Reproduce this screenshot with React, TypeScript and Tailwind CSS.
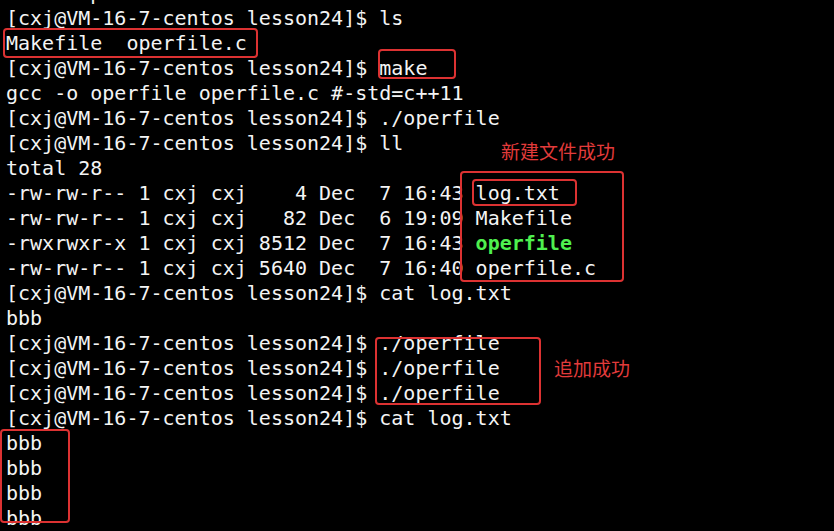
const prompt = "[cxj@VM-16-7-centos lesson24]$ ";

type Line = { text: string; exec?: string };

const lines: Line[] = [
  { text: "       p" },
  { text: prompt + "ls" },
  { text: "Makefile  operfile.c" },
  { text: prompt + "make" },
  { text: "gcc -o operfile operfile.c #-std=c++11" },
  { text: prompt + "./operfile" },
  { text: prompt + "ll" },
  { text: "total 28" },
  { text: "-rw-rw-r-- 1 cxj cxj    4 Dec  7 16:43 log.txt" },
  { text: "-rw-rw-r-- 1 cxj cxj   82 Dec  6 19:09 Makefile" },
  { text: "-rwxrwxr-x 1 cxj cxj 8512 Dec  7 16:43 ", exec: "operfile" },
  { text: "-rw-rw-r-- 1 cxj cxj 5640 Dec  7 16:40 operfile.c" },
  { text: prompt + "cat log.txt" },
  { text: "bbb" },
  { text: prompt + "./operfile" },
  { text: prompt + "./operfile" },
  { text: prompt + "./operfile" },
  { text: prompt + "cat log.txt" },
  { text: "bbb" },
  { text: "bbb" },
  { text: "bbb" },
  { text: "bbb" },
];

const boxes = [
  "left-[3px] top-[28px] w-[255px] h-[30px]",
  "left-[378px] top-[49px] w-[78px] h-[30px]",
  "left-[460px] top-[171px] w-[164px] h-[111px]",
  "left-[472px] top-[179px] w-[105px] h-[27px]",
  "left-[375px] top-[337px] w-[166px] h-[68px]",
  "left-[0px] top-[429px] w-[70px] h-[94px]",
];

export default function App() {
  return (
    <div className="relative h-[531px] w-[834px] overflow-hidden bg-black">
      <div className="-mt-[19px] pl-[6px] font-['DejaVu_Sans_Mono',monospace] text-[20px] leading-[25px] text-[#f4f4f4]">
        {lines.map((line, i) => (
          <div key={i} className="h-[25px] whitespace-pre">
            {line.text}
            {line.exec && (
              <span className="font-bold text-[#4ff04f]">{line.exec}</span>
            )}
          </div>
        ))}
      </div>

      {boxes.map((cls) => (
        <div
          key={cls}
          className={"absolute rounded-[4px] border-2 border-[#dc3232] " + cls}
        />
      ))}

      <span className="absolute left-[501px] top-[139px] font-['Noto_Sans_CJK_SC',sans-serif] text-[19px] leading-[24px] text-[#e23b3b]">
        新建文件成功
      </span>
      <span className="absolute left-[554px] top-[356px] font-['Noto_Sans_CJK_SC',sans-serif] text-[19px] leading-[24px] text-[#e23b3b]">
        追加成功
      </span>
    </div>
  );
}
